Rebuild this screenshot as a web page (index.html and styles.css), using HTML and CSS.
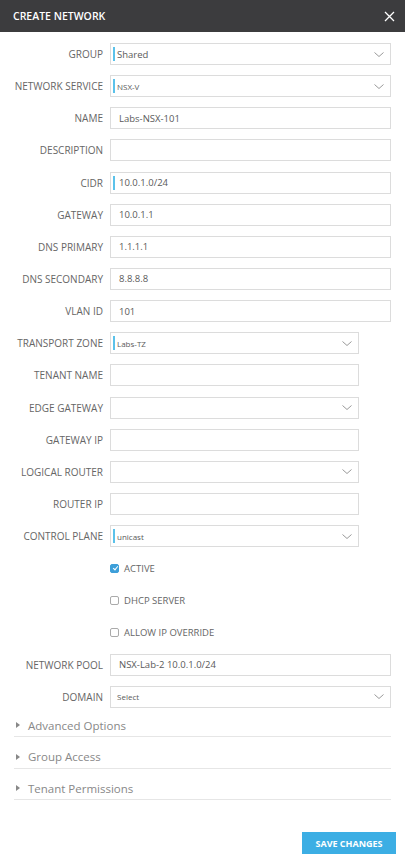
FILE: index.html
```html
<!DOCTYPE html>
<html lang="en">
<head>
    <meta charset="UTF-8">
    <meta name="viewport" content="width=device-width, initial-scale=1.0">
    <title>Create Network</title>
    <link rel="stylesheet" href="styles.css">
</head>
<body>
    <div class="modal">
        <div class="modal-header">
            <span class="modal-title">CREATE NETWORK</span>
            <svg class="close-icon" width="11" height="11" viewBox="0 0 11 11">
                <path d="M1 1 L10 10 M10 1 L1 10" stroke="#fff" stroke-width="1.3" fill="none"/>
            </svg>
        </div>

        <div class="modal-body">
            <div class="form-row">
                <label>GROUP</label>
                <div class="field select marked"><span class="value">Shared</span><svg class="chevron" viewBox="0 0 10 5"><path d="M0.5 0.5 L5 4.5 L9.5 0.5"/></svg></div>
            </div>
            <div class="form-row">
                <label>NETWORK SERVICE</label>
                <div class="field select marked"><span class="value small">NSX-V</span><svg class="chevron" viewBox="0 0 10 5"><path d="M0.5 0.5 L5 4.5 L9.5 0.5"/></svg></div>
            </div>
            <div class="form-row">
                <label>NAME</label>
                <div class="field"><span class="value">Labs-NSX-101</span></div>
            </div>
            <div class="form-row">
                <label>DESCRIPTION</label>
                <div class="field"></div>
            </div>
            <div class="form-row">
                <label>CIDR</label>
                <div class="field marked"><span class="value">10.0.1.0/24</span></div>
            </div>
            <div class="form-row">
                <label>GATEWAY</label>
                <div class="field"><span class="value">10.0.1.1</span></div>
            </div>
            <div class="form-row">
                <label>DNS PRIMARY</label>
                <div class="field"><span class="value">1.1.1.1</span></div>
            </div>
            <div class="form-row">
                <label>DNS SECONDARY</label>
                <div class="field"><span class="value">8.8.8.8</span></div>
            </div>
            <div class="form-row">
                <label>VLAN ID</label>
                <div class="field"><span class="value">101</span></div>
            </div>
            <div class="form-row narrow">
                <label>TRANSPORT ZONE</label>
                <div class="field select marked"><span class="value small">Labs-TZ</span><svg class="chevron" viewBox="0 0 10 5"><path d="M0.5 0.5 L5 4.5 L9.5 0.5"/></svg></div>
            </div>
            <div class="form-row narrow">
                <label>TENANT NAME</label>
                <div class="field"></div>
            </div>
            <div class="form-row narrow">
                <label>EDGE GATEWAY</label>
                <div class="field select"><span class="value"></span><svg class="chevron" viewBox="0 0 10 5"><path d="M0.5 0.5 L5 4.5 L9.5 0.5"/></svg></div>
            </div>
            <div class="form-row narrow">
                <label>GATEWAY IP</label>
                <div class="field"></div>
            </div>
            <div class="form-row narrow">
                <label>LOGICAL ROUTER</label>
                <div class="field select"><span class="value"></span><svg class="chevron" viewBox="0 0 10 5"><path d="M0.5 0.5 L5 4.5 L9.5 0.5"/></svg></div>
            </div>
            <div class="form-row narrow">
                <label>ROUTER IP</label>
                <div class="field"></div>
            </div>
            <div class="form-row narrow">
                <label>CONTROL PLANE</label>
                <div class="field select marked"><span class="value small">unicast</span><svg class="chevron" viewBox="0 0 10 5"><path d="M0.5 0.5 L5 4.5 L9.5 0.5"/></svg></div>
            </div>
            <div class="form-row">
                <span></span>
                <div class="check"><span class="box checked"></span>ACTIVE</div>
            </div>
            <div class="form-row">
                <span></span>
                <div class="check"><span class="box"></span>DHCP SERVER</div>
            </div>
            <div class="form-row">
                <span></span>
                <div class="check"><span class="box"></span>ALLOW IP OVERRIDE</div>
            </div>
            <div class="form-row">
                <label>NETWORK POOL</label>
                <div class="field"><span class="value">NSX-Lab-2 10.0.1.0/24</span></div>
            </div>
            <div class="form-row">
                <label>DOMAIN</label>
                <div class="field select"><span class="value small">Select</span><svg class="chevron" viewBox="0 0 10 5"><path d="M0.5 0.5 L5 4.5 L9.5 0.5"/></svg></div>
            </div>

            <div class="sections">
                <div class="section"><span class="caret"></span>Advanced Options</div>
                <div class="section"><span class="caret"></span>Group Access</div>
                <div class="section"><span class="caret"></span>Tenant Permissions</div>
            </div>
        </div>

        <div class="modal-footer">
            <button class="save-button">SAVE CHANGES</button>
        </div>
    </div>
</body>
</html>
```

FILE: styles.css
```css
* {
    margin: 0;
    padding: 0;
    box-sizing: border-box;
}

body {
    font-family: "Open Sans", "Noto Sans", sans-serif;
    background: #fff;
    color: #444;
    width: 405px;
}

.modal {
    display: flex;
    flex-direction: column;
    min-height: 864px;
}

.modal-header {
    height: 32px;
    background: #3c3c3e;
    display: flex;
    align-items: center;
    justify-content: space-between;
    padding: 0 10px 0 13px;
}

.modal-title {
    color: #fff;
    font-size: 10.5px;
    font-weight: 600;
}

.close-icon {
    display: block;
}

.modal-body {
    padding: 11px 14px 0 0;
    display: flex;
    flex-direction: column;
    gap: 10.15px;
}

.form-row {
    display: grid;
    grid-template-columns: 103px 281px;
    column-gap: 7px;
    align-items: center;
    height: 22px;
}

.form-row.narrow {
    grid-template-columns: 103px 249px;
}

.form-row label {
    text-align: right;
    font-size: 10px;
    color: #666;
    white-space: nowrap;
}

.field {
    position: relative;
    height: 22px;
    border: 1px solid #dcdcdc;
    background: #fff;
    display: flex;
    align-items: center;
    padding: 0 8px;
}

.field.marked::before {
    content: "";
    position: absolute;
    left: 2px;
    top: 3px;
    bottom: 3px;
    width: 2px;
    background: #5bc2ea;
}

.field.select {
    padding: 0 6px;
    justify-content: space-between;
}

.value {
    font-size: 9.5px;
    color: #5a5a5a;
}

.value.small {
    font-size: 8px;
}

.chevron {
    width: 10px;
    height: 5px;
    fill: none;
    stroke: #999;
    stroke-width: 1;
}

.check {
    display: flex;
    align-items: center;
    font-size: 9.5px;
    color: #666;
    gap: 5px;
}

.box {
    width: 9px;
    height: 9px;
    border: 1px solid #aaa;
    border-radius: 2px;
    position: relative;
}

.box.checked {
    background: #3d9fd9;
    border-color: #3d9fd9;
}

.box.checked::after {
    content: "";
    position: absolute;
    left: 2.5px;
    top: 0.5px;
    width: 2px;
    height: 4px;
    border-right: 1.5px solid #fff;
    border-bottom: 1.5px solid #fff;
    transform: rotate(40deg);
}

.sections {
    margin-left: 14px;
    margin-top: -12px;
}

.section {
    display: flex;
    align-items: center;
    font-size: 11.5px;
    color: #888;
    line-height: 15px;
    padding: 12px 0 3.5px;
    border-bottom: 1px solid #e6e6e6;
}

.caret {
    width: 0;
    height: 0;
    border-top: 3px solid transparent;
    border-bottom: 3px solid transparent;
    border-left: 4px solid #888;
    margin: 0 8px 0 2px;
}

.modal-footer {
    margin-top: auto;
    display: flex;
    justify-content: flex-end;
    padding: 0 9px 10px 0;
}

.save-button {
    width: 94px;
    height: 22px;
    border: none;
    background: #3caee4;
    color: #fff;
    font-family: inherit;
    font-size: 9px;
    font-weight: 700;
    cursor: pointer;
}
```
